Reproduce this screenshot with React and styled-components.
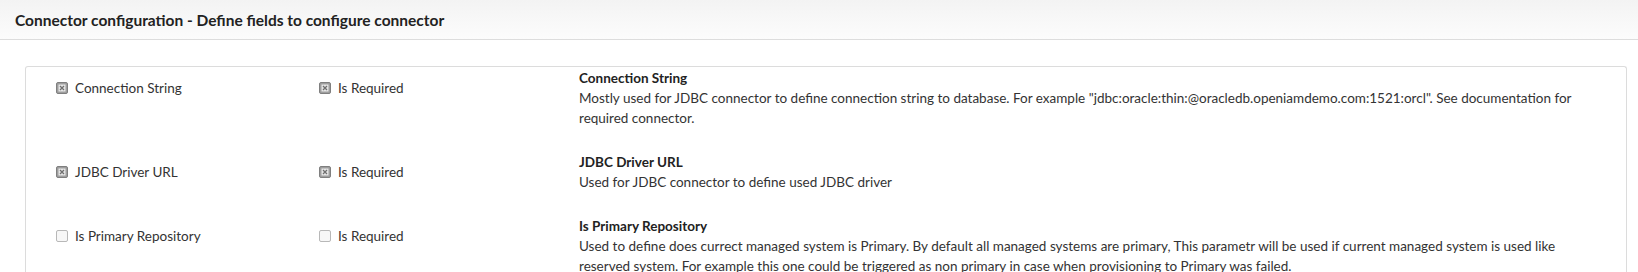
import styled, { createGlobalStyle, css } from "styled-components"

const GlobalStyle = createGlobalStyle`
    html, body {
        margin: 0;
        padding: 0;
        background: #ffffff;
    }
    body {
        font-family: 'Lato', 'Liberation Sans', sans-serif;
        color: #333333;
    }
`;

const Panel = styled.div`
    width: 1638px;
    height: 272px;
    overflow: hidden;
    background: #ffffff;
`;

const PanelHeader = styled.div`
    height: 40px;
    box-sizing: border-box;
    padding: 0 15px;
    display: flex;
    align-items: center;
    background: linear-gradient(to bottom, #f3f3f3, #fcfcfc);
    border-bottom: 1px solid #dddddd;
    font-size: 15.5px;
    font-weight: 700;
    color: #222222;
`;

const PanelBody = styled.div`
    padding: 26px 11px 0 25px;
`;

const Card = styled.div`
    border: 1px solid #dcdcdc;
    border-bottom: none;
    border-radius: 3px 3px 0 0;
    padding: 1px 0 0 0;
`;

const FieldRow = styled.div`
    display: grid;
    grid-template-columns: 263px 260px 1fr;
    padding: 0 30px 0 30px;
    margin-bottom: 24px;
`;

const CheckCell = styled.label`
    display: flex;
    align-items: center;
    gap: 7px;
    height: 20px;
    margin-top: 10px;
    font-size: 13.5px;
    color: #333333;
`;

const Box = styled.span`
    width: 12px;
    height: 12px;
    box-sizing: border-box;
    border-radius: 2px;
    display: inline-flex;
    align-items: center;
    justify-content: center;
    ${(p) =>
        p.checked
            ? css`
                  border: 1px solid #7f7f7f;
                  background: #9e9e9e;
              `
            : css`
                  border: 1px solid #b8b8b8;
                  background: #f7f7f7;
              `}
`;

const Info = styled.div`
    font-size: 13.5px;
    line-height: 20px;
`;

const InfoTitle = styled.div`
    font-weight: 700;
    color: #222222;
`;

const InfoText = styled.div`
    color: #333333;
`;

const Check = ({ checked }) => (
    <Box checked={checked}>
        {checked && (
            <svg width="8" height="8" viewBox="0 0 8 8">
                <rect x="0.5" y="0.5" width="7" height="7" fill="#e6e6e6" />
                <path d="M2 2 L6 6 M6 2 L2 6" stroke="#6f6f6f" strokeWidth="1.3" />
            </svg>
        )}
    </Box>
);

const fields = [
    {
        name: "Connection String",
        checked: true,
        text: 'Mostly used for JDBC connector to define connection string to database. For example "jdbc:oracle:thin:@oracledb.openiamdemo.com:1521:orcl". See documentation for required connector.',
    },
    {
        name: "JDBC Driver URL",
        checked: true,
        text: "Used for JDBC connector to define used JDBC driver",
    },
    {
        name: "Is Primary Repository",
        checked: false,
        text: "Used to define does currect managed system is Primary. By default all managed systems are primary, This parametr will be used if current managed system is used like reserved system. For example this one could be triggered as non primary in case when provisioning to Primary was failed.",
    },
];

export default function App() {
    return (
        <Panel>
            <GlobalStyle />
            <PanelHeader>Connector configuration - Define fields to configure connector</PanelHeader>
            <PanelBody>
                <Card>
                    {fields.map((f) => (
                        <FieldRow key={f.name}>
                            <CheckCell>
                                <Check checked={f.checked} />
                                {f.name}
                            </CheckCell>
                            <CheckCell>
                                <Check checked={f.checked} />
                                Is Required
                            </CheckCell>
                            <Info>
                                <InfoTitle>{f.name}</InfoTitle>
                                <InfoText>{f.text}</InfoText>
                            </Info>
                        </FieldRow>
                    ))}
                </Card>
            </PanelBody>
        </Panel>
    );
}
